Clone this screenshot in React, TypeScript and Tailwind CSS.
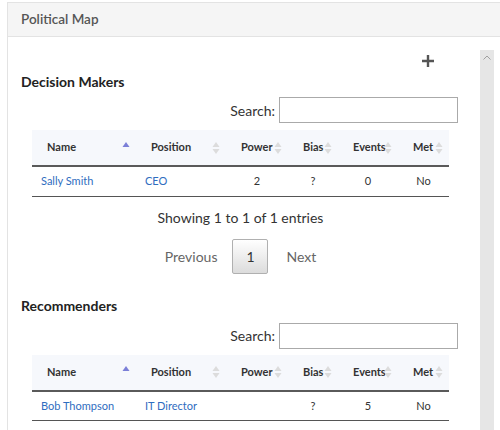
import React from "react";

interface Person {
  name: string;
  position: string;
  power: string;
  bias: string;
  events: string;
  met: string;
}

const columns = [
  { key: "name", label: "Name", width: "w-[104px]", sorted: true },
  { key: "position", label: "Position", width: "w-[90px]" },
  { key: "power", label: "Power", width: "w-[62px]" },
  { key: "bias", label: "Bias", width: "w-[50px]" },
  { key: "events", label: "Events", width: "w-[60px]" },
  { key: "met", label: "Met", width: "w-[51px]" },
];

function SortIcon({ active }: { active?: boolean }) {
  return (
    <svg width="8" height="13" viewBox="0 0 8 13" className="absolute right-[6px] top-1/2 -translate-y-1/2">
      <path d="M4 0.5 L7.5 5.5 L0.5 5.5 Z" fill={active ? "#7b7fd8" : "#dcdcdc"} />
      {!active && <path d="M4 12.5 L7.5 7.5 L0.5 7.5 Z" fill="#dcdcdc" />}
    </svg>
  );
}

function PeopleTable({ rows }: { rows: Person[] }) {
  return (
    <table className="ml-[24px] w-[417px] table-fixed border-collapse text-[11px]">
      <thead>
        <tr className="bg-[#f6f8fc] border-b-2 border-[#5a5a5a]">
          {columns.map((c) => (
            <th
              key={c.key}
              className={`${c.width} relative h-[36px] pl-[15px] text-left font-bold text-[#333]`}
            >
              {c.label}
              <SortIcon active={c.sorted} />
            </th>
          ))}
        </tr>
      </thead>
      <tbody>
        {rows.map((r) => (
          <tr key={r.name} className="border-b border-[#555] h-[30px] text-[#333]">
            <td className="pl-[9px] text-[#2f6dc0]">{r.name}</td>
            <td className="pl-[9px] text-[#2f6dc0]">{r.position}</td>
            <td className="text-center">{r.power}</td>
            <td className="text-center">{r.bias}</td>
            <td className="text-center">{r.events}</td>
            <td className="text-center">{r.met}</td>
          </tr>
        ))}
      </tbody>
    </table>
  );
}

function SearchBox() {
  return (
    <div className="flex items-center justify-end pr-[22px] text-[14px] text-[#333]">
      <span className="mr-[4px]">Search:</span>
      <input
        type="text"
        className="h-[26px] w-[179px] border border-[#aaa] bg-white outline-none"
      />
    </div>
  );
}

export default function App() {
  const decisionMakers: Person[] = [
    { name: "Sally Smith", position: "CEO", power: "2", bias: "?", events: "0", met: "No" },
  ];
  const recommenders: Person[] = [
    { name: "Bob Thompson", position: "IT Director", power: "", bias: "?", events: "5", met: "No" },
  ];

  return (
    <div
      className="h-[430px] w-[500px] overflow-hidden bg-white pt-[2px] pl-[7px]"
      style={{ fontFamily: "Lato, 'Noto Sans', sans-serif" }}
    >
      <div className="w-[520px] border-l border-t border-[#e3e3e3]">
        <div className="flex h-[34px] items-center border-b border-[#e3e3e3] bg-[#f5f5f5] pl-[13px] text-[13.5px] font-semibold text-[#555]">
          Political Map
        </div>
        <div className="flex">
          <div className="w-[472px]">
            <div className="mt-[13px] flex h-[22px] items-center justify-end pr-[46px]">
              <svg width="12" height="12" viewBox="0 0 12 12">
                <path d="M6 0 V12 M0 6 H12" stroke="#555" strokeWidth="2.4" />
              </svg>
            </div>
            <h2 className="h-[20px] pl-[13px] text-[14px] font-bold leading-[20px] text-[#222]">
              Decision Makers
            </h2>
            <div className="mt-[5px]">
              <SearchBox />
            </div>
            <div className="mt-[7px]">
              <PeopleTable rows={decisionMakers} />
            </div>
            <div className="mt-[11px] pl-[24px] w-[441px] text-center text-[14px] leading-[20px] text-[#333]">
              Showing 1 to 1 of 1 entries
            </div>
            <div className="mt-[11px] flex items-center justify-center pl-[24px] w-[441px] text-[14px] text-[#666]">
              <span className="mr-[15px]">Previous</span>
              <button className="h-[35px] w-[36px] rounded-[2px] border border-[#b0b0b0] bg-gradient-to-b from-white to-[#dcdcdc] text-[#333]">
                1
              </button>
              <span className="ml-[18px]">Next</span>
            </div>
            <h2 className="mt-[22px] h-[20px] pl-[13px] text-[14px] font-bold leading-[20px] text-[#222]">
              Recommenders
            </h2>
            <div className="mt-[7px]">
              <SearchBox />
            </div>
            <div className="mt-[6px]">
              <PeopleTable rows={recommenders} />
            </div>
          </div>
          <div className="mt-[13px] flex h-[400px] w-[14px] justify-center bg-[#e6e6e6] pt-[5px]">
            <svg width="8" height="5" viewBox="0 0 8 5">
              <path d="M0.5 4.5 L4 1 L7.5 4.5" fill="none" stroke="#a0a0a0" strokeWidth="1" />
            </svg>
          </div>
        </div>
      </div>
    </div>
  );
}
